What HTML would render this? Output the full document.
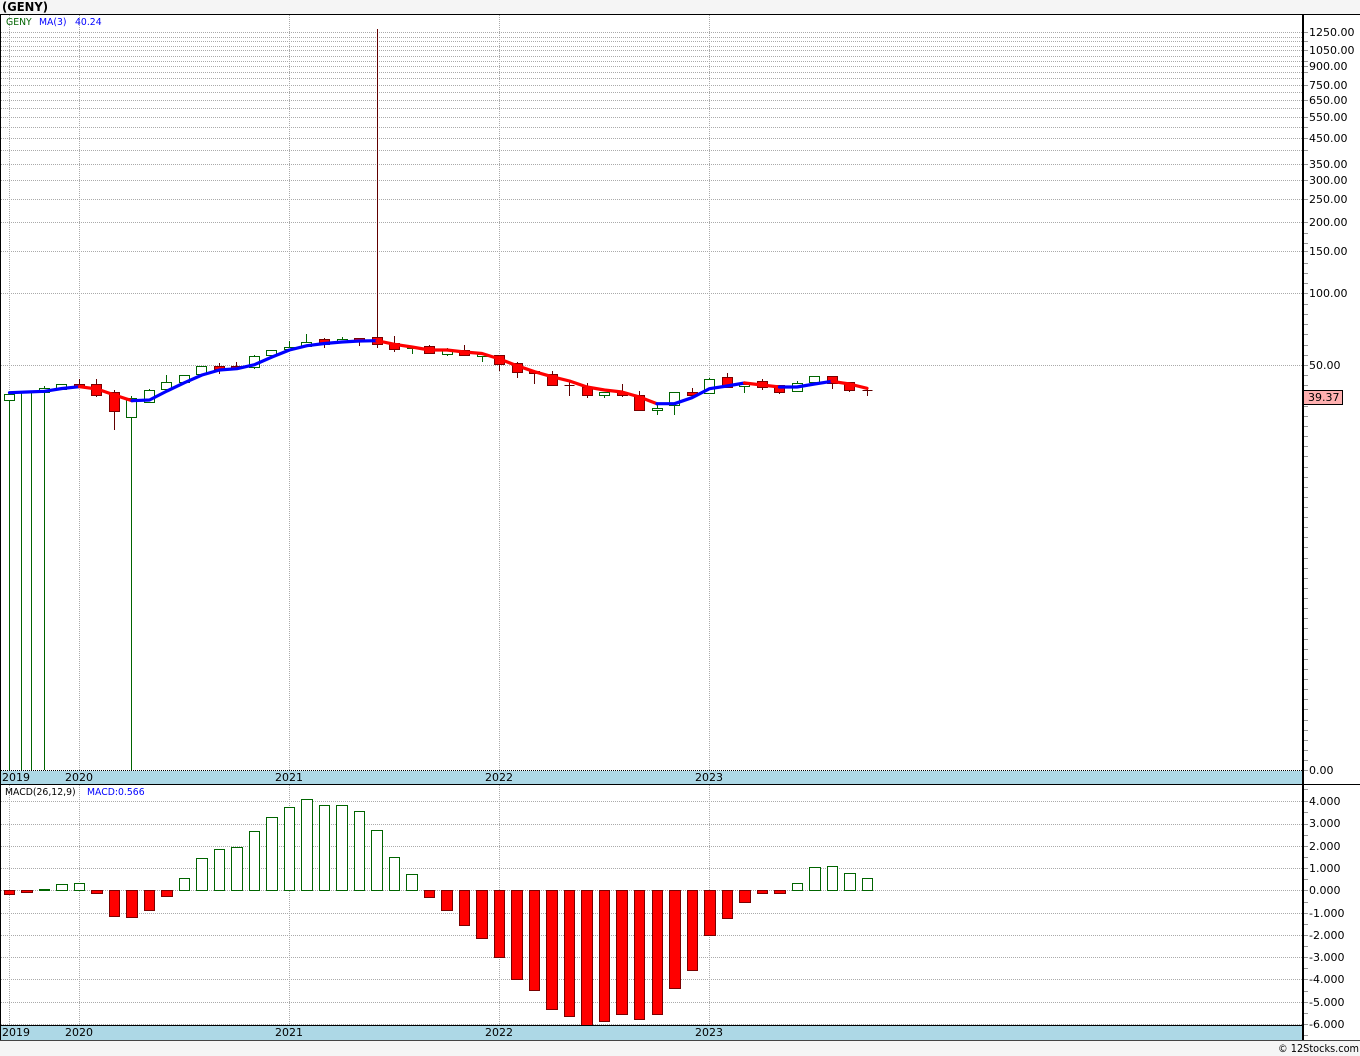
<!DOCTYPE html>
<html>
<head>
<meta charset="utf-8">
<title>GENY</title>
<style>
html,body{margin:0;padding:0;background:#f5f5f5;}
svg{display:block;}
text{font-family:"DejaVu Sans","Liberation Sans",sans-serif;font-size:11px;fill:#000;}
.s{font-size:9.3px;}
.ds{shape-rendering:crispEdges;}
.gr{stroke:#aaa;stroke-width:1;stroke-dasharray:1 1;fill:none;shape-rendering:crispEdges;}
.g{fill:#fff;stroke:#006400;stroke-width:1;shape-rendering:crispEdges;}
.r{fill:#f00;stroke:#7a0000;stroke-width:1;shape-rendering:crispEdges;}
.gw{stroke:#006400;stroke-width:1;fill:none;shape-rendering:crispEdges;}
.rw{stroke:#600000;stroke-width:1;fill:none;shape-rendering:crispEdges;}
.tk{stroke:#999;stroke-width:1;fill:none;shape-rendering:crispEdges;}
.ma{fill:none;stroke-width:3.2;stroke-linejoin:round;stroke-linecap:round;}
</style>
</head>
<body>
<svg width="1360" height="1056" viewBox="0 0 1360 1056" xmlns="http://www.w3.org/2000/svg">
<rect x="0" y="0" width="1360" height="1056" fill="#f5f5f5"/>
<rect x="0" y="14" width="1360" height="1027" fill="#fff"/>
<text x="2" y="11" textLength="46" lengthAdjust="spacingAndGlyphs" style="font-size:12px;font-weight:bold">(GENY)</text>

<!-- grid price -->
<path class="gr" d="M1 32.5H1303M1 37.5H1303M1 41.5H1303M1 46.5H1303M1 50.5H1303M1 56.5H1303M1 61.5H1303M1 66.5H1303M1 72.5H1303M1 78.5H1303M1 85.5H1303M1 92.5H1303M1 100.5H1303M1 108.5H1303M1 117.5H1303M1 127.5H1303M1 138.5H1303M1 150.5H1303M1 164.5H1303M1 180.5H1303M1 199.5H1303M1 222.5H1303M1 251.5H1303M1 293.5H1303M1 365.5H1303"/>
<path class="gr" d="M9.5 15V770M79.5 15V770M289.5 15V770M499.5 15V770M709.5 15V770"/>
<path class="gr" d="M1 770.5H1303" style="stroke:#000"/>

<!-- grid macd -->
<path class="gr" d="M1 801.5H1303M1 824.5H1303M1 846.5H1303M1 868.5H1303M1 890.5H1303M1 913.5H1303M1 935.5H1303M1 957.5H1303M1 979.5H1303M1 1002.5H1303M1 1024.5H1303"/>
<path class="gr" d="M9.5 785V1025M79.5 785V1025M289.5 785V1025M499.5 785V1025M709.5 785V1025"/>

<!-- wicks -->
<path class="gw" d="M9.5 392V770M21.5 391V770M31.5 391V770M44.5 386V770M61.5 384V389M131.5 396V770M149.5 389V402M166.5 375V389M184.5 375V382M201.5 366V374M254.5 355V369M271.5 350V355M289.5 341V349M306.5 334V346M342.5 337V341M412.5 347V354M447.5 348V356M482.5 354V362M604.5 392V398M657.5 403V415M674.5 392V415M709.5 378V393M744.5 383V393M797.5 381V391M814.5 376V382"/>
<path class="rw" d="M79.5 379V388M96.5 379V397M114.5 390V430M219.5 363V374M236.5 362V369M324.5 338V348M359.5 338V346M377.5 29V348M394.5 336V352M429.5 345V353M464.5 345V355M499.5 355V371M517.5 362V378M534.5 371V384M552.5 371V385M569.5 382V396M587.5 383V398M622.5 384V397M639.5 391V411M692.5 388V395M727.5 373V387M762.5 379V390M779.5 385V394M832.5 376V389M849.5 382V392M867.5 388V396"/>

<!-- candles -->
<rect class="g" x="4.5" y="394.5" width="10" height="6"/>
<rect class="g" x="39.5" y="388.5" width="10" height="4"/>
<rect class="g" x="56.5" y="384.5" width="10" height="5"/>
<rect class="r" x="74.5" y="384.5" width="10" height="3"/>
<rect class="r" x="91.5" y="384.5" width="10" height="11"/>
<rect class="r" x="109.5" y="392.5" width="10" height="19"/>
<rect class="g" x="126.5" y="398.5" width="10" height="19"/>
<rect class="g" x="144.5" y="390.5" width="10" height="12"/>
<rect class="g" x="161.5" y="382.5" width="10" height="7"/>
<rect class="g" x="179.5" y="375.5" width="10" height="7"/>
<rect class="g" x="196.5" y="366.5" width="10" height="8"/>
<rect class="r" x="214.5" y="366.5" width="10" height="3"/>
<rect class="r" x="231.5" y="366.5" width="10" height="2"/>
<rect class="g" x="249.5" y="356.5" width="10" height="11"/>
<rect class="g" x="266.5" y="350.5" width="10" height="5"/>
<rect class="g" x="284.5" y="347.5" width="10" height="2"/>
<rect class="g" x="301.5" y="342.5" width="10" height="4"/>
<rect class="r" x="319.5" y="339.5" width="10" height="5"/>
<rect class="g" x="337.5" y="339.5" width="10" height="2"/>
<rect class="r" x="354.5" y="338.5" width="10" height="3"/>
<rect class="r" x="372.5" y="337.5" width="10" height="7"/>
<rect class="r" x="389.5" y="343.5" width="10" height="6"/>
<rect class="g" x="407.5" y="347.5" width="10" height="1"/>
<rect class="r" x="424.5" y="346.5" width="10" height="7"/>
<rect class="g" x="442.5" y="350.5" width="10" height="4"/>
<rect class="r" x="459.5" y="350.5" width="10" height="5"/>
<rect class="g" x="477.5" y="354.5" width="10" height="2"/>
<rect class="r" x="494.5" y="355.5" width="10" height="9"/>
<rect class="r" x="512.5" y="363.5" width="10" height="9"/>
<rect class="r" x="529.5" y="371.5" width="10" height="2"/>
<rect class="r" x="547.5" y="374.5" width="10" height="11"/>
<path class="rw" d="M564.5 385.5H574.5"/>
<rect class="r" x="582.5" y="387.5" width="10" height="8"/>
<rect class="g" x="599.5" y="392.5" width="10" height="3"/>
<rect class="r" x="617.5" y="392.5" width="10" height="3"/>
<rect class="r" x="634.5" y="395.5" width="10" height="15"/>
<rect class="g" x="652.5" y="408.5" width="10" height="2"/>
<rect class="g" x="669.5" y="392.5" width="10" height="13"/>
<rect class="r" x="687.5" y="392.5" width="10" height="3"/>
<rect class="g" x="704.5" y="379.5" width="10" height="14"/>
<rect class="r" x="722.5" y="377.5" width="10" height="10"/>
<rect class="g" x="739.5" y="384.5" width="10" height="2"/>
<rect class="r" x="757.5" y="381.5" width="10" height="6"/>
<rect class="r" x="774.5" y="385.5" width="10" height="7"/>
<rect class="g" x="792.5" y="383.5" width="10" height="8"/>
<rect class="g" x="809.5" y="376.5" width="10" height="6"/>
<rect class="r" x="827.5" y="376.5" width="10" height="7"/>
<rect class="r" x="844.5" y="382.5" width="10" height="8"/>
<path class="rw" d="M862.5 390.5H872.5"/>

<!-- MA line -->
<polyline class="ma" stroke="#00f" points="9.5,392.7 27,392 44.5,391.3 62,388.5 79.5,386.7"/>
<polyline class="ma" stroke="#f00" points="79.5,386.7 97,389 114.5,395 132,400.7"/>
<polyline class="ma" stroke="#00f" points="132,400.7 149.5,400 167,391 184.5,382.7 202,375 219.5,370 237,368.7 254.5,364.7 272,357 289.5,350 307,345.7 324.5,343.5 342,342 359.5,341 377,340.7"/>
<polyline class="ma" stroke="#f00" points="377,340.7 394.5,344.3 412,347 429.5,350 447,350 464.5,352 482,353.5 499.5,359 517,365.7 534.5,371.7 552,376.7 569.5,381 587,387 604.5,390 622,392 639.5,397 657,403.7"/>
<polyline class="ma" stroke="#00f" points="657,403.7 674.5,403.7 692,397.7 709.5,388.7 727,386 744.5,383"/>
<polyline class="ma" stroke="#f00" points="744.5,383 762,385 779.5,387"/>
<polyline class="ma" stroke="#00f" points="779.5,387 797,387 814.5,384 832,381.3"/>
<polyline class="ma" stroke="#f00" points="832,381.3 849.5,384 867,388.3"/>

<!-- MACD bars -->
<rect class="r" x="4.5" y="890.5" width="10" height="4"/>
<rect class="r" x="21.5" y="890.5" width="11" height="2"/>
<rect class="g" x="39.5" y="889.5" width="10" height="1" style="fill:#006400"/>
<rect class="g" x="56.5" y="884.5" width="11" height="6"/>
<rect class="g" x="74.5" y="883.5" width="10" height="7"/>
<rect class="r" x="91.5" y="890.5" width="11" height="3"/>
<rect class="r" x="109.5" y="890.5" width="10" height="26"/>
<rect class="r" x="126.5" y="890.5" width="11" height="27"/>
<rect class="r" x="144.5" y="890.5" width="10" height="20"/>
<rect class="r" x="161.5" y="890.5" width="11" height="6"/>
<rect class="g" x="179.5" y="878.5" width="10" height="12"/>
<rect class="g" x="196.5" y="858.5" width="11" height="32"/>
<rect class="g" x="214.5" y="849.5" width="10" height="41"/>
<rect class="g" x="231.5" y="847.5" width="11" height="43"/>
<rect class="g" x="249.5" y="831.5" width="10" height="59"/>
<rect class="g" x="266.5" y="817.5" width="11" height="73"/>
<rect class="g" x="284.5" y="807.5" width="10" height="83"/>
<rect class="g" x="301.5" y="799.5" width="11" height="91"/>
<rect class="g" x="319.5" y="805.5" width="10" height="85"/>
<rect class="g" x="336.5" y="805.5" width="11" height="85"/>
<rect class="g" x="354.5" y="811.5" width="10" height="79"/>
<rect class="g" x="371.5" y="830.5" width="11" height="60"/>
<rect class="g" x="389.5" y="857.5" width="10" height="33"/>
<rect class="g" x="406.5" y="874.5" width="11" height="16"/>
<rect class="r" x="424.5" y="890.5" width="10" height="7"/>
<rect class="r" x="441.5" y="890.5" width="11" height="20"/>
<rect class="r" x="459.5" y="890.5" width="10" height="35"/>
<rect class="r" x="476.5" y="890.5" width="11" height="48"/>
<rect class="r" x="494.5" y="890.5" width="10" height="67"/>
<rect class="r" x="511.5" y="890.5" width="11" height="89"/>
<rect class="r" x="529.5" y="890.5" width="10" height="100"/>
<rect class="r" x="546.5" y="890.5" width="11" height="119"/>
<rect class="r" x="564.5" y="890.5" width="10" height="126"/>
<rect class="r" x="581.5" y="890.5" width="11" height="135"/>
<rect class="r" x="599.5" y="890.5" width="10" height="131"/>
<rect class="r" x="616.5" y="890.5" width="11" height="124"/>
<rect class="r" x="634.5" y="890.5" width="10" height="129"/>
<rect class="r" x="652.5" y="890.5" width="10" height="124"/>
<rect class="r" x="669.5" y="890.5" width="11" height="98"/>
<rect class="r" x="687.5" y="890.5" width="10" height="80"/>
<rect class="r" x="704.5" y="890.5" width="11" height="45"/>
<rect class="r" x="722.5" y="890.5" width="10" height="28"/>
<rect class="r" x="739.5" y="890.5" width="11" height="12"/>
<rect class="r" x="757.5" y="890.5" width="10" height="3"/>
<rect class="r" x="774.5" y="890.5" width="11" height="3"/>
<rect class="g" x="792.5" y="883.5" width="10" height="7"/>
<rect class="g" x="809.5" y="867.5" width="11" height="23"/>
<rect class="g" x="827.5" y="866.5" width="10" height="24"/>
<rect class="g" x="844.5" y="873.5" width="11" height="17"/>
<rect class="g" x="862.5" y="878.5" width="10" height="12"/>

<!-- bands -->
<rect x="1" y="771" width="1302" height="13" fill="#add8e6"/>
<rect x="1" y="1026" width="1302" height="14" fill="#add8e6"/>

<!-- frame -->
<g class="ds">
<rect x="0" y="14" width="1360" height="1" fill="#000"/>
<rect x="0" y="14" width="1" height="1026" fill="#000"/>
<rect x="1302" y="14" width="2" height="1026" fill="#000"/>
<rect x="0" y="784" width="1360" height="1" fill="#000"/>
<rect x="0" y="1025" width="1303" height="1" fill="#000"/>
<rect x="0" y="1040" width="1360" height="1" fill="#444"/>
</g>

<!-- ticks -->
<path class="tk" d="M1304 32.5h4M1304 41.5h4M1304 50.5h4M1304 61.5h4M1304 66.5h4M1304 72.5h4M1304 85.5h4M1304 100.5h4M1304 117.5h4M1304 127.5h4M1304 138.5h4M1304 150.5h4M1304 164.5h4M1304 180.5h4M1304 199.5h4M1304 222.5h4M1304 233.5h4M1304 243.5h4M1304 251.5h4M1304 263.5h4M1304 273.5h4M1304 283.5h4M1304 293.5h4M1304 304.5h4M1304 314.5h4M1304 324.5h4M1304 334.5h4M1304 345.5h4M1304 355.5h4M1304 365.5h4M1304 375.5h4M1304 385.5h4M1304 406.5h4M1304 416.5h4M1304 426.5h4M1304 436.5h4M1304 446.5h4M1304 456.5h4M1304 467.5h4M1304 477.5h4M1304 487.5h4M1304 497.5h4M1304 507.5h4M1304 517.5h4M1304 527.5h4M1304 537.5h4M1304 547.5h4M1304 558.5h4M1304 568.5h4M1304 578.5h4M1304 588.5h4M1304 598.5h4M1304 608.5h4M1304 618.5h4M1304 628.5h4M1304 639.5h4M1304 649.5h4M1304 659.5h4M1304 669.5h4M1304 679.5h4M1304 689.5h4M1304 699.5h4M1304 709.5h4M1304 720.5h4M1304 730.5h4M1304 740.5h4M1304 750.5h4M1304 760.5h4M1304 770.5h4"/>
<path class="tk" d="M1304 789.5h4M1304 801.5h4M1304 812.5h4M1304 824.5h4M1304 835.5h4M1304 846.5h4M1304 857.5h4M1304 868.5h4M1304 879.5h4M1304 890.5h4M1304 902.5h4M1304 913.5h4M1304 924.5h4M1304 935.5h4M1304 946.5h4M1304 957.5h4M1304 968.5h4M1304 979.5h4M1304 991.5h4M1304 1002.5h4M1304 1013.5h4M1304 1024.5h4M1304 1035.5h4"/>

<!-- price labels -->
<text x="1309" y="36">1250.00</text>
<text x="1309" y="54">1050.00</text>
<text x="1309" y="70">900.00</text>
<text x="1309" y="89">750.00</text>
<text x="1309" y="104">650.00</text>
<text x="1309" y="121">550.00</text>
<text x="1309" y="142">450.00</text>
<text x="1309" y="168">350.00</text>
<text x="1309" y="184">300.00</text>
<text x="1309" y="203">250.00</text>
<text x="1309" y="226">200.00</text>
<text x="1309" y="255">150.00</text>
<text x="1309" y="297">100.00</text>
<text x="1309" y="369">50.00</text>
<text x="1309" y="774">0.00</text>

<rect x="1303.5" y="390.5" width="39" height="14" fill="#ffb0b0" stroke="#000" class="ds"/>
<text x="1308" y="401">39.37</text>

<!-- macd labels -->
<text x="1309" y="805">4.000</text>
<text x="1309" y="827">3.000</text>
<text x="1309" y="850">2.000</text>
<text x="1309" y="872">1.000</text>
<text x="1309" y="894">0.000</text>
<text x="1309" y="917">-1.000</text>
<text x="1309" y="939">-2.000</text>
<text x="1309" y="961">-3.000</text>
<text x="1309" y="983">-4.000</text>
<text x="1309" y="1006">-5.000</text>
<text x="1309" y="1028">-6.000</text>

<!-- years -->
<text x="2" y="781">2019</text>
<text x="65" y="781">2020</text>
<text x="275" y="781">2021</text>
<text x="485" y="781">2022</text>
<text x="695" y="781">2023</text>
<text x="2" y="1036">2019</text>
<text x="65" y="1036">2020</text>
<text x="275" y="1036">2021</text>
<text x="485" y="1036">2022</text>
<text x="695" y="1036">2023</text>

<!-- legends -->
<text class="s" x="6" y="25" style="fill:#006400">GENY</text>
<text class="s" x="39" y="25" style="fill:#00f">MA(3)</text>
<text class="s" x="75" y="25" style="fill:#00f">40.24</text>
<text class="s" x="5" y="795">MACD(26,12,9)</text>
<text class="s" x="87" y="795" style="fill:#00f">MACD:0.566</text>

<text x="1278" y="1052" textLength="81" lengthAdjust="spacingAndGlyphs">© 12Stocks.com</text>
</svg>
</body>
</html>
